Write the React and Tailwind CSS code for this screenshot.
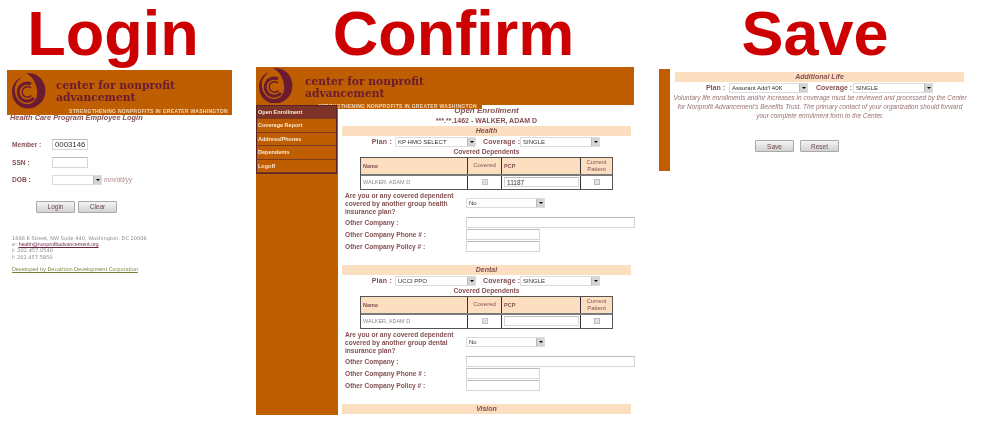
import React from 'react';

const label = "font-['Liberation_Sans',Arial,sans-serif] font-bold text-[#855052]";

function Logo() {
  return (
    <svg viewBox="0 0 34 36" className="w-[34px] h-[36px] shrink-0" fill="none">
      <path d="M14 .5 C25 -1 33.500 7 33.500 18 C33.500 28 25 35.500 16 35.500 C7 35.500 0 28 0 19 C0 12 4 6 10 4 C5 8 2 13 3 19 C4 27 10 32 17 31 C23 30 26 24 25 17 C24 9 20 3 14 .5Z" fill="#6a1b32" />
      <path d="M22 25 A9 9 0 1 1 19 11" stroke="#6a1b32" strokeWidth="3" />
      <path d="M19.500 22.500 A5.300 5.300 0 1 1 19 15" stroke="#6a1b32" strokeWidth="1.400" />
    </svg>
  );
}

function Banner({ width, height, pad, textTop, tagClass }) {
  return (
    <div className={`relative flex items-start bg-[#bf5e00] ${pad} ${width} ${height}`}>
      <Logo />
      <div className={`font-['DejaVu_Serif',serif] font-bold text-[#6a1b32] text-[10.7px] leading-[11.5px] ${textTop}`}>
        <div>center for nonprofit</div>
        <div>advancement</div>
      </div>
      <div className={`absolute font-['Liberation_Sans',sans-serif] font-bold text-[#f3d9b8] text-[5px] leading-[6px] tracking-[0.3px] whitespace-nowrap ${tagClass}`}>
        STRENGTHENING NONPROFITS IN GREATER WASHINGTON
      </div>
    </div>
  );
}

function Heading({ children, className }) {
  return (
    <h1 className={`font-['Liberation_Sans',Arial,sans-serif] font-bold text-[#cc0000] text-[63px] leading-[67px] text-center ${className}`}>
      {children}
    </h1>
  );
}

function Select({ value, width }) {
  return (
    <div className={`flex items-center justify-between h-[10px] border border-[#dcdcdc] bg-white shrink-0 ${width}`}>
      <span className="pl-[2px] font-['Liberation_Sans',sans-serif] text-[6px] leading-[8px] text-[#333333] whitespace-nowrap overflow-hidden">{value}</span>
      <span className="flex items-center justify-center w-[8px] h-[8px] bg-[#d4d4d4] border-l border-[#b8b8b8] shrink-0">
        <span className="w-0 h-0 border-x-[2px] border-x-transparent border-t-[2px] border-t-black" />
      </span>
    </div>
  );
}

function Input({ value, width, height = 'h-[11px]', text = 'text-[6.5px]' }) {
  return (
    <div className={`border border-[#d6d6d6] border-t-[#bcbcbc] bg-white shrink-0 pl-[2px] font-['Liberation_Sans',sans-serif] leading-[9px] text-[#333333] ${text} ${width} ${height}`}>
      {value}
    </div>
  );
}

function Button({ children }) {
  return (
    <div className="flex items-center justify-center w-[39px] h-[12px] rounded-[1px] border border-[#a9a9a9] bg-gradient-to-b from-[#f4f4f4] to-[#d2d2d2] font-['Liberation_Sans',sans-serif] text-[6.5px] text-[#6d4a4a]">
      {children}
    </div>
  );
}

function Band({ children }) {
  return (
    <div className="h-[10px] w-[289px] bg-[#fbdfc0] text-center font-['Liberation_Sans',sans-serif] font-bold italic text-[7px] leading-[10px] text-[#855052]">
      {children}
    </div>
  );
}

function PlanRow({ plan, className }) {
  return (
    <div className={`flex items-center h-[10px] w-[289px] ${className}`}>
      <span className={`${label} text-[7px] tracking-[0.2px] w-[50px] shrink-0 text-right whitespace-nowrap`}>Plan :</span>
      <Select value={plan} width="w-[81px] ml-[3px]" />
      <span className={`${label} text-[7px] tracking-[0.1px] ml-[7px] w-[34px] whitespace-nowrap`}>Coverage :</span>
      <Select value="SINGLE" width="w-[80px] ml-[3px]" />
    </div>
  );
}

function DependentsTable({ pcp }) {
  return (
    <div className="ml-[18px] w-[253px] border-[1.5px] border-[#555555] font-['Liberation_Sans',sans-serif] text-[5.5px]">
      <div className="grid grid-cols-[107px_34px_79px_1fr] h-[17.500px] bg-[#fbdfc0] border-b-2 border-[#7a7a7a] font-bold text-[#855052]">
        <div className="flex items-center pl-[2px] border-r border-[#333333]">Name</div>
        <div className="flex items-center justify-center border-r border-[#333333] font-normal text-[6px]">Covered</div>
        <div className="flex items-center pl-[2px] border-r border-[#333333]">PCP</div>
        <div className="flex items-center justify-center text-center leading-[7px] font-normal text-[6px]">Current Patient</div>
      </div>
      <div className="grid grid-cols-[107px_34px_79px_1fr] h-[13.500px] bg-white text-[#888888]">
        <div className="flex items-center pl-[2px] border-r border-[#333333]">WALKER, ADAM D</div>
        <div className="flex items-center justify-center border-r border-[#333333]">
          <span className="w-[6px] h-[6px] border border-[#c4c4c4] bg-[#ececec] text-[5px] leading-[5px] text-center text-[#aaaaaa]">✓</span>
        </div>
        <div className="flex items-center pl-[2px] border-r border-[#333333]">
          <Input value={pcp} width="w-[75px]" height="h-[10px]" />
        </div>
        <div className="flex items-center justify-center">
          <span className="w-[6px] h-[6px] border border-[#bbbbbb] bg-[#e4e4e4]" />
        </div>
      </div>
    </div>
  );
}

function CoverageSection({ title, plan, pcp, kind, extra }) {
  return (
    <div className={extra}>
      <Band>{title}</Band>
      <PlanRow plan={plan} className="mt-[1px]" />
      <div className={`${label} text-[6.6px] leading-[9px] text-center w-[289px]`}>Covered Dependents</div>
      <div className="mt-[1px]">
        <DependentsTable pcp={pcp} />
      </div>
      <div className="flex pl-[3px] mt-[2px]">
        <div className={`${label} text-[6.6px] leading-[8px] w-[121px] shrink-0 pr-[4px]`}>
          Are you or any covered dependent covered by another group {kind} insurance plan?
        </div>
        <div className="mt-[6px]">
          <Select value="No" width="w-[79px]" />
        </div>
      </div>
      <div className="flex flex-col gap-[1px] pl-[3px] mt-[1px]">
        <div className="flex items-center">
          <span className={`${label} text-[6.6px] w-[121px] shrink-0`}>Other Company :</span>
          <Input width="w-[169px]" />
        </div>
        <div className="flex items-center">
          <span className={`${label} text-[6.6px] w-[121px] shrink-0`}>Other Company Phone # :</span>
          <Input width="w-[74px]" />
        </div>
        <div className="flex items-center">
          <span className={`${label} text-[6.6px] w-[121px] shrink-0`}>Other Company Policy # :</span>
          <Input width="w-[74px]" />
        </div>
      </div>
    </div>
  );
}

function LoginColumn() {
  return (
    <div className="w-[256px] shrink-0">
      <Heading className="w-[226px]">Login</Heading>
      <div className="pl-[7px] pt-[3px]">
        <Banner width="w-[225px]" height="h-[45px]" pad="pl-[5px] pt-[3px] gap-[10px]" textTop="mt-[7px]" tagClass="left-[62px] bottom-[1px]" />
      </div>
      <div className={`${label} italic text-[7.4px] leading-[10px] pl-[10px] mt-[-2px]`}>Health Care Program Employee Login</div>
      <div className="flex flex-col gap-[7px] pl-[12px] pt-[16px]">
        <div className="flex items-center">
          <span className={`${label} text-[6.6px] w-[40px]`}>Member :</span>
          <Input value="0003146" width="w-[36px]" text="text-[7.8px]" />
        </div>
        <div className="flex items-center">
          <span className={`${label} text-[6.6px] w-[40px]`}>SSN :</span>
          <Input width="w-[36px]" />
        </div>
        <div className="flex items-center">
          <span className={`${label} text-[6.6px] w-[40px]`}>DOB :</span>
          <Select width="w-[50px]" />
          <span className="ml-[2px] font-['Liberation_Sans',sans-serif] italic text-[6.5px] text-[#a98a8a]">mm/dd/yy</span>
        </div>
      </div>
      <div className="flex gap-[3px] pl-[36px] pt-[16px]">
        <Button>Login</Button>
        <Button>Clear</Button>
      </div>
      <div className="pl-[12px] pt-[22px] font-['DejaVu_Sans',sans-serif] text-[5.1px] leading-[6.2px] text-[#8c8c8c]">
        <div>1666 K Street, NW Suite 440, Washington, DC 20006</div>
        <div>e: <span className="underline tracking-[-0.3px] text-[#6d2645]">health@nonprofitadvancement.org</span></div>
        <div>t: 202.457.0540</div>
        <div>f: 202.457.5850</div>
        <div className="mt-[6px] underline tracking-[-0.1px] text-[#7b7b3a]">Developed by Decathlon Development Corporation</div>
      </div>
    </div>
  );
}

function ConfirmColumn() {
  return (
    <div className="w-[403px] shrink-0">
      <Heading className="w-[395px]">Confirm</Heading>
      <Banner width="w-[378px]" height="h-[38px]" pad="pl-[3px] pt-[1px] gap-[12px]" textTop="mt-[8px]" tagClass="left-0 bottom-[-4px] pl-[62px] pr-[5px] bg-[#bf5e00]" />
      <div className="flex h-[310px] w-[380px]">
        <div className="relative z-10 w-[82px] bg-[#bf5e00] shrink-0">
          <div className="w-[81px] border border-[#5c1f24] font-['Liberation_Sans',sans-serif] font-bold text-[5.5px] text-[#fbe9d4]">
            {['Open Enrollment', 'Coverage Report', 'Address/Phones', 'Dependents', 'Logoff'].map((item, i) => (
              <div
                key={item}
                className={`h-[13.4px] leading-[13px] pl-[1px] border-b border-[#7a3a20] ${i === 0 ? 'bg-[#7d3328]' : ''}`}
              >
                {item}
              </div>
            ))}
          </div>
        </div>
        <div className="pl-[4px] overflow-hidden">
          <div className={`${label} italic text-[8px] leading-[10px] pt-[1px] h-[10px] w-[289px] text-center`}>Open Enrollment</div>
          <div className={`${label} text-[7px] leading-[11px] w-[289px] text-center`}>***.**.1462 - WALKER, ADAM D</div>
          <CoverageSection title="Health" plan="KP HMO SELECT" pcp="11187" kind="health" />
          <CoverageSection title="Dental" plan="UCCI PPO" kind="dental" extra="mt-[13px]" />
          <div className="mt-[13px]">
            <Band>Vision</Band>
          </div>
          <div className="flex mt-[1px] h-[1px]">
            <div className="ml-[53px] w-[81px] bg-[#dcdcdc]" />
            <div className="ml-[44px] w-[80px] bg-[#dcdcdc]" />
          </div>
        </div>
      </div>
    </div>
  );
}

function SaveColumn() {
  return (
    <div className="w-[328px] shrink-0">
      <Heading className="w-[312px]">Save</Heading>
      <div className="flex h-[102px] mt-[2px]">
        <div className="w-[11px] bg-[#bf5e00] shrink-0" />
        <div className="pl-[5px] pt-[3px] w-[300px]">
          <Band>Additional Life</Band>
          <div className="flex items-center h-[10px] w-[289px] mt-[1px]">
            <span className={`${label} text-[7px] w-[50px] text-right shrink-0`}>Plan :</span>
            <Select value="Assurant Add'l 40K" width="w-[79px] ml-[4px]" />
            <span className={`${label} text-[7px] ml-[8px] w-[34px] whitespace-nowrap`}>Coverage :</span>
            <Select value="SINGLE" width="w-[80px] ml-[3px]" />
          </div>
          <div className="ml-[-4px] w-[298px] mt-[1px] font-['Liberation_Sans',sans-serif] italic text-[6.45px] leading-[8.8px] text-center text-[#9a7272]">
            Voluntary life enrollments and/or increases in coverage must be reviewed and processed by the Center for Nonprofit Advancement's Benefits Trust. The primary contact of your organization should forward your complete enrollment form to the Center.
          </div>
          <div className="flex gap-[6px] pl-[80px] pt-[20px]">
            <Button>Save</Button>
            <Button>Reset</Button>
          </div>
        </div>
      </div>
    </div>
  );
}

export default function App() {
  return (
    <div className="flex w-[987px] h-[425px] bg-white overflow-hidden blur-[0.3px]">
      <LoginColumn />
      <ConfirmColumn />
      <SaveColumn />
    </div>
  );
}
